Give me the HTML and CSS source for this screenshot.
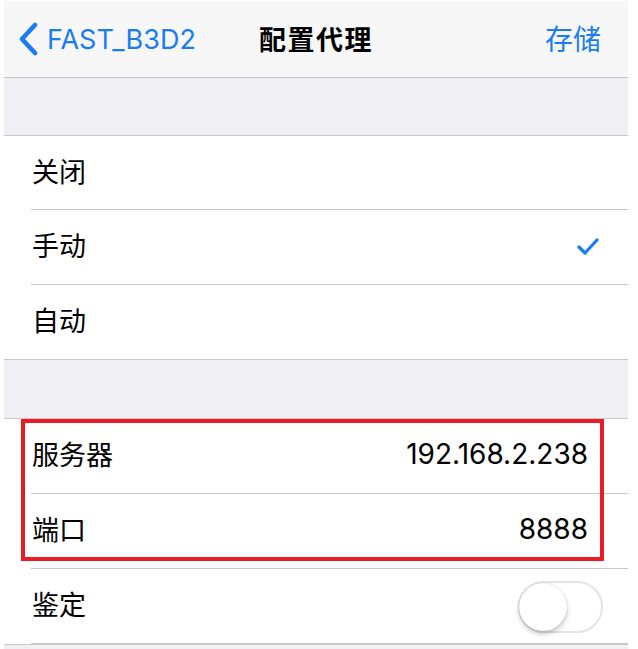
FILE: index.html
```html
<!DOCTYPE html>
<html lang="zh-CN">
<head>
<meta charset="utf-8">
<title>配置代理</title>
<link rel="stylesheet" href="styles.css">
</head>
<body>
<div class="screen">
  <header class="nav">
    <div class="nav-left">
      <svg class="chevron" width="22" height="34" viewBox="0 0 22 34"><path d="M17 3 L4 17 L17 31" fill="none" stroke="#1a7cf5" stroke-width="4.6" stroke-linecap="round" stroke-linejoin="round"/></svg>
      <span class="back-label">FAST_B3D2</span>
    </div>
    <div class="nav-title">配置代理</div>
    <div class="nav-right">存储</div>
  </header>

  <div class="spacer"></div>

  <section class="group group-mode">
    <div class="row"><span class="label">关闭</span></div>
    <div class="row"><span class="label">手动</span>
      <svg class="check" width="22" height="17" viewBox="0 0 22 17"><path d="M2 9 L8 15 L20 2" fill="none" stroke="#1a7cf5" stroke-width="3.2" stroke-linecap="round" stroke-linejoin="round"/></svg>
    </div>
    <div class="row"><span class="label">自动</span></div>
  </section>

  <div class="spacer spacer-tall"></div>

  <section class="group">
    <div class="row"><span class="label">服务器</span><span class="value">192.168.2.238</span></div>
    <div class="row"><span class="label">端口</span><span class="value">8888</span></div>
    <div class="row"><span class="label">鉴定</span><span class="toggle"><span class="knob"></span></span></div>
    <div class="highlight"></div>
  </section>

  <div class="spacer bottom"></div>
</div>
</body>
</html>
```

FILE: styles.css
```css
html, body {
  margin: 0;
  padding: 0;
  background: #ffffff;
}

.screen {
  width: 624px;
  margin: 1px 0 0 4px;
  font-family: Inter, "Noto Sans CJK SC", sans-serif;
  color: #000;
  overflow: hidden;
  height: 648px;
  background: #efeff4;
}

.nav {
  height: 76px;
  background: #f7f7f8;
  border-bottom: 1px solid #c4c4c8;
  display: grid;
  grid-template-columns: 1fr auto 1fr;
  align-items: center;
}

.nav-left {
  display: flex;
  align-items: center;
  padding-left: 14px;
  gap: 7px;
  color: #1a7cf5;
}

.chevron {
  display: block;
}

.back-label {
  font-size: 27px;
}

.nav-title {
  font-size: 27px;
  font-weight: 700;
  letter-spacing: 1.5px;
  font-family: "Noto Sans CJK SC", sans-serif;
  padding-bottom: 2px;
}

.nav-right {
  justify-self: end;
  padding-right: 27px;
  font-size: 28px;
  color: #1a7cf5;
  font-family: "Noto Sans CJK SC", sans-serif;
  padding-bottom: 2px;
}

.spacer {
  height: 57px;
  background: #efeff4;
  border-bottom: 1px solid #c8c7cc;
}

.spacer-tall {
  height: 58px;
}

.spacer.bottom {
  height: 8px;
  border-bottom: none;
}

.group {
  position: relative;
  background: #ffffff;
  border-bottom: 1px solid #c8c7cc;
}

.row {
  height: 74px;
  margin-left: 27px;
  display: flex;
  align-items: center;
  justify-content: space-between;
  border-bottom: 1px solid #c8c7cc;
}

.group-mode .row:first-child {
  height: 73px;
}

.row:last-of-type {
  border-bottom: none;
}

.label {
  font-size: 27px;
  line-height: 1;
  font-family: "Noto Sans CJK SC", sans-serif;
  padding-left: 1px;
  padding-bottom: 5px;
}

.value {
  font-size: 28px;
  line-height: 1;
  padding-right: 40px;
  padding-bottom: 4px;
}

.check {
  margin-right: 29px;
  margin-bottom: 2px;
}

.toggle {
  position: relative;
  width: 81px;
  height: 48px;
  border: 2px solid #e4e4e6;
  border-radius: 26px;
  margin-right: 25px;
  margin-top: 2px;
  background: #ffffff;
}

.knob {
  position: absolute;
  left: -1px;
  top: 0;
  width: 48px;
  height: 48px;
  border-radius: 50%;
  background: #ffffff;
  box-shadow: 0 3px 5px rgba(0,0,0,0.22), 0 0 1px rgba(0,0,0,0.25);
}

.highlight {
  position: absolute;
  left: 17px;
  top: 0;
  width: 575px;
  height: 134px;
  border: 4px solid #ec1c24;
  pointer-events: none;
}
```
